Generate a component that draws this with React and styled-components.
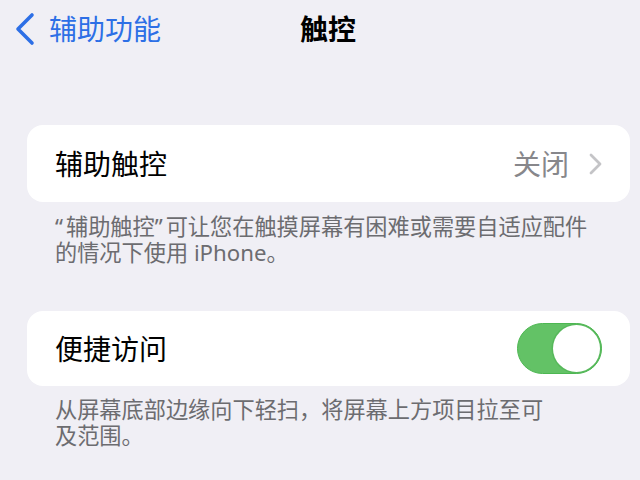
import React from "react"
import styled, { createGlobalStyle } from "styled-components"

const GlobalStyle = createGlobalStyle`
  html, body {
    margin: 0;
    padding: 0;
    background: #f0eff5;
  }
  body {
    font-family: "Noto Sans", "Noto Sans CJK SC", sans-serif;
    -webkit-font-smoothing: antialiased;
  }
`

const Page = styled.div`
  width: 640px;
  height: 480px;
  overflow: hidden;
  background: #f0eff5;
`

const NavBar = styled.div`
  display: grid;
  grid-template-columns: 1fr auto 1fr;
  align-items: center;
  height: 58px;
  padding: 0 14px;
`

const BackLink = styled.div`
  display: flex;
  align-items: center;
  gap: 14px;
  color: #2d6fe6;
  font-size: 28px;
  line-height: 32px;
`

const Title = styled.div`
  font-size: 28px;
  line-height: 32px;
  font-weight: 700;
  color: #000;
  padding-left: 16px;
`

const Content = styled.div`
  display: flex;
  flex-direction: column;
  padding: 67px 10px 0 27px;
`

const Card = styled.div`
  display: flex;
  align-items: center;
  justify-content: space-between;
  height: ${({ h }) => h}px;
  padding: 0 28px;
  background: #fff;
  border-radius: 16px;
`

const Label = styled.span`
  font-size: 28px;
  line-height: 32px;
  color: #000;
`

const Detail = styled.div`
  display: flex;
  align-items: center;
  gap: 20px;
  font-size: 28px;
  line-height: 32px;
  color: #87878b;
`

const Footer = styled.p`
  margin: ${({ top }) => top}px 0 0 28px;
  font-size: 22.2px;
  line-height: 26px;
  color: #6c6c70;
`

const Quote = styled.span`
  letter-spacing: 3px;
`

const Spacer = styled.div`
  height: ${({ h }) => h}px;
`

const Toggle = styled.div`
  display: flex;
  justify-content: flex-end;
  align-items: center;
  box-sizing: border-box;
  width: 85px;
  height: 51px;
  padding: 1px;
  border-radius: 26px;
  background: #63c266;
  border: 1px solid #4db752;
`

const Knob = styled.div`
  width: 47px;
  height: 47px;
  border-radius: 50%;
  background: #fff;
  box-shadow: 0 0 0 1.5px #56b85a;
`

const BackChevron = () => (
  <svg width="21" height="34" viewBox="0 0 21 34">
    <polyline
      points="18,3 4,17 18,31"
      fill="none"
      stroke="#2d6fe6"
      strokeWidth="3.6"
      strokeLinecap="round"
      strokeLinejoin="round"
    />
  </svg>
)

const Chevron = () => (
  <svg width="13" height="22" viewBox="0 0 13 22">
    <polyline
      points="2,2 11,11 2,20"
      fill="none"
      stroke="#c4c4c7"
      strokeWidth="2.8"
      strokeLinecap="round"
      strokeLinejoin="round"
    />
  </svg>
)

export default function App() {
  return (
    <Page>
      <GlobalStyle />
      <NavBar>
        <BackLink>
          <BackChevron />
          辅助功能
        </BackLink>
        <Title>触控</Title>
        <div />
      </NavBar>
      <Content>
        <Card h={77}>
          <Label>辅助触控</Label>
          <Detail>
            关闭
            <Chevron />
          </Detail>
        </Card>
        <Footer top={12}>
          <Quote>“</Quote>辅助触控<Quote>”</Quote>可让您在触摸屏幕有困难或需要自适应配件
          <br />
          的情况下使用 iPhone。
        </Footer>
        <Spacer h={45} />
        <Card h={75}>
          <Label>便捷访问</Label>
          <Toggle>
            <Knob />
          </Toggle>
        </Card>
        <Footer top={11}>
          从屏幕底部边缘向下轻扫，将屏幕上方项目拉至可
          <br />
          及范围。
        </Footer>
      </Content>
    </Page>
  )
}
